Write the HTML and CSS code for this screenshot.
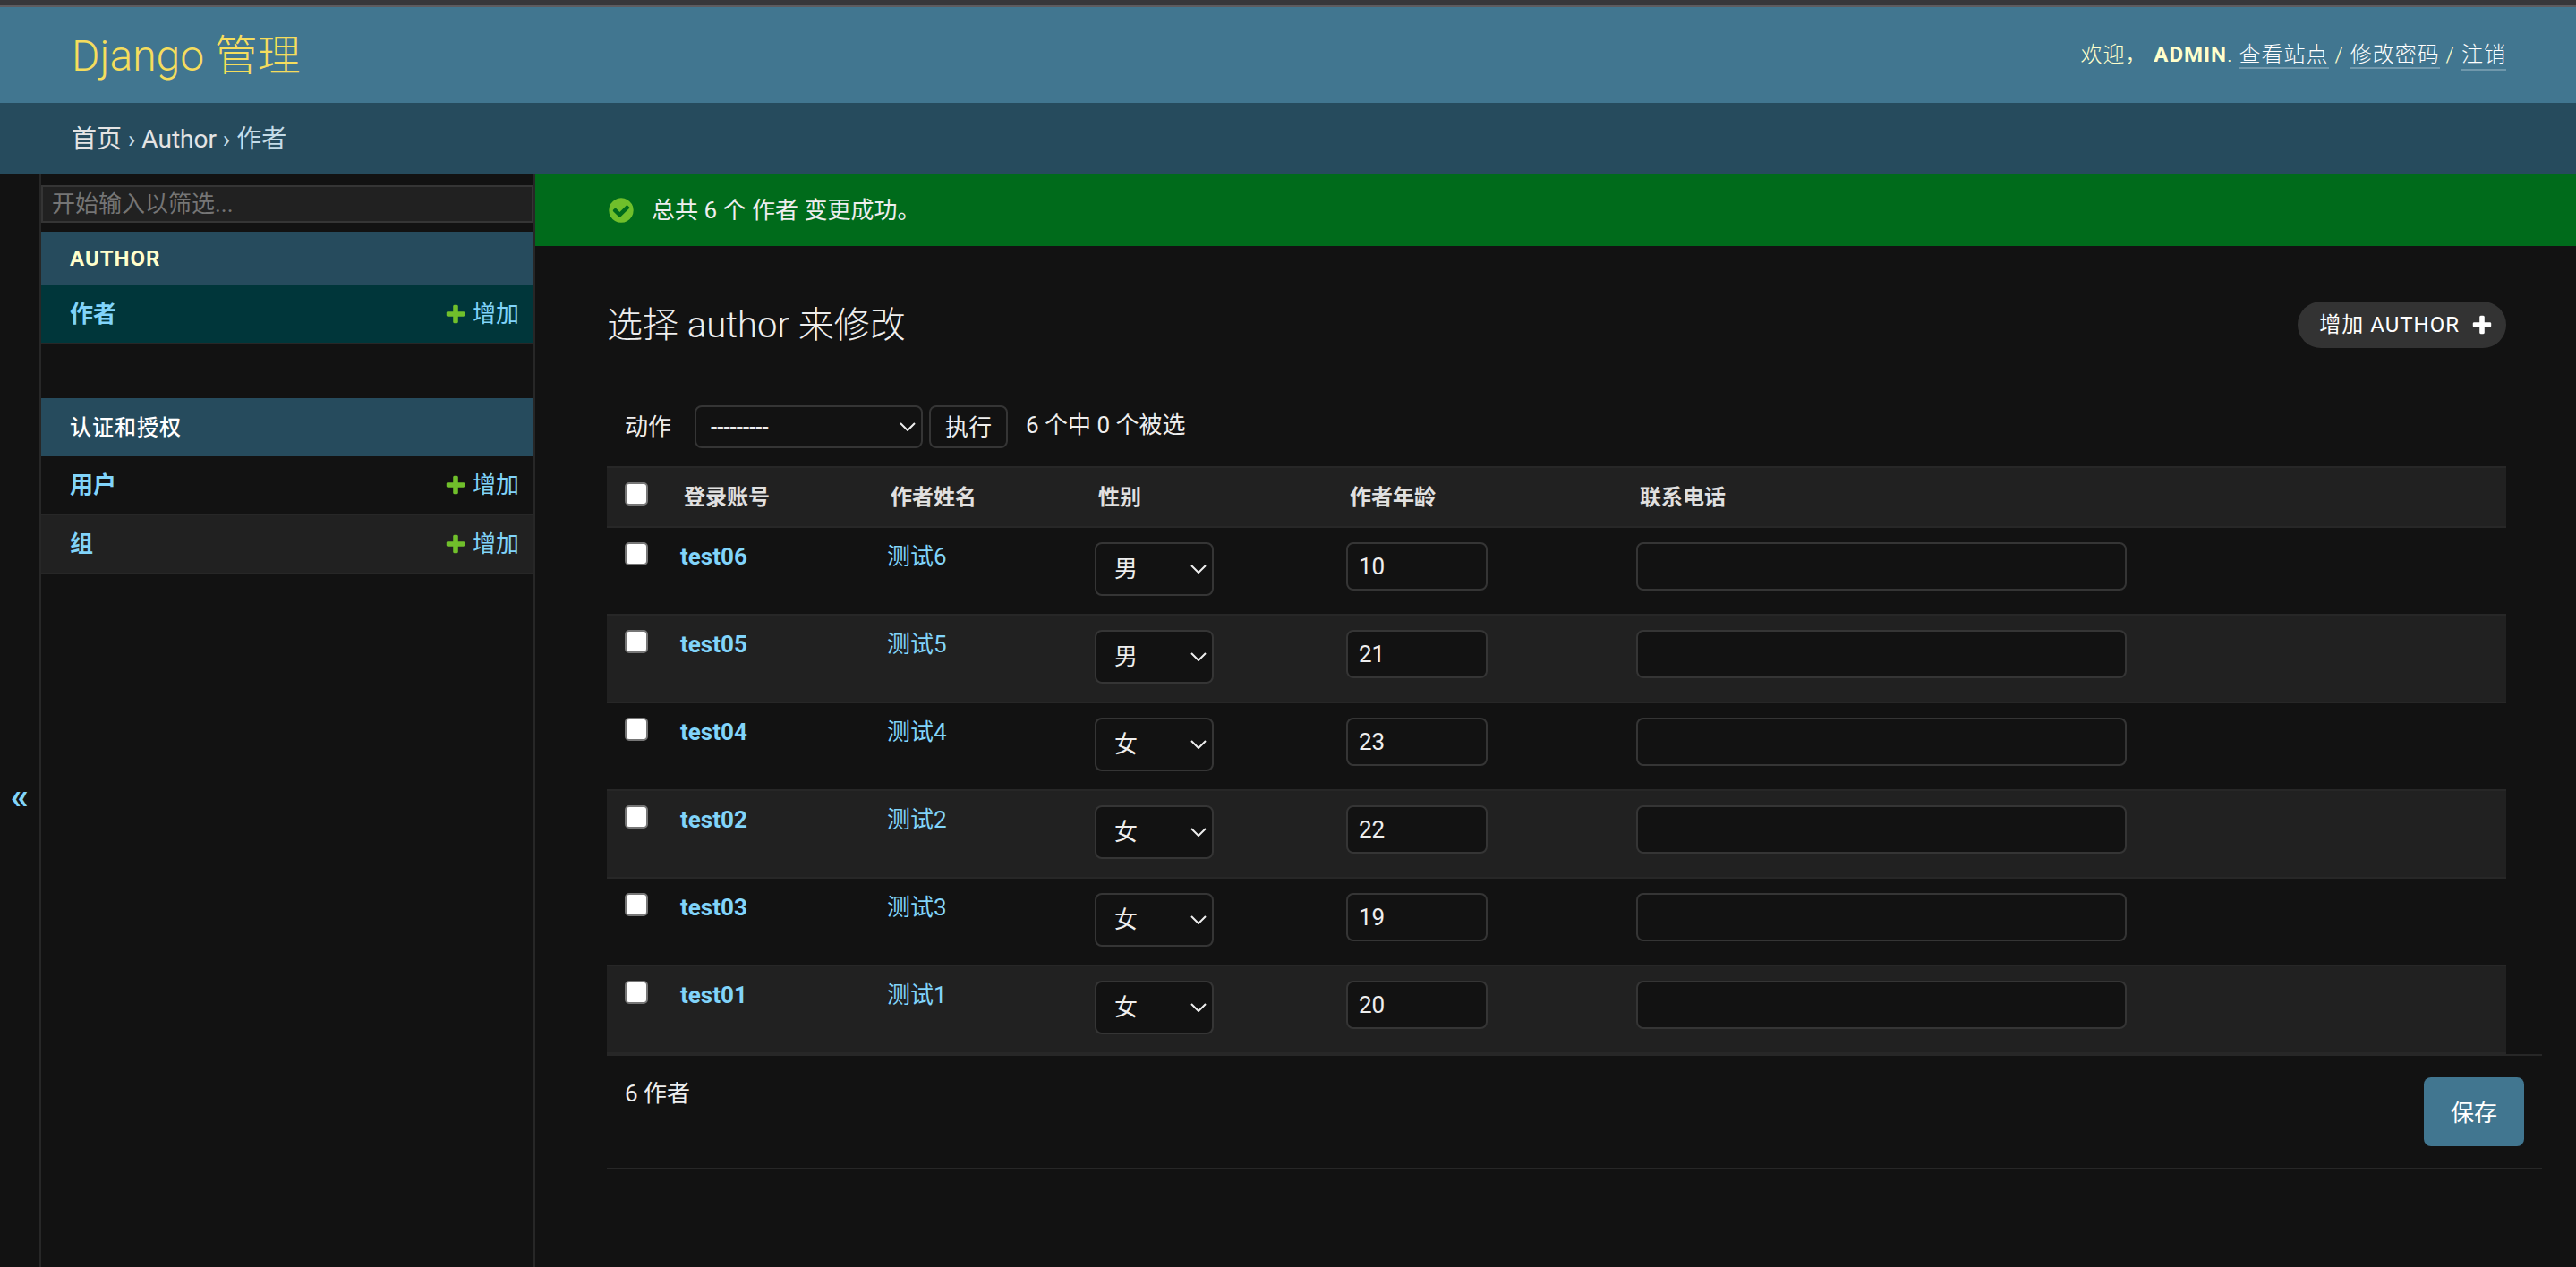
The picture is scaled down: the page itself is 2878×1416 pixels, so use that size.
FILE: index.html
```html
<!DOCTYPE html>
<html lang="zh-hans">
<head>
    <meta charset="UTF-8">
    <meta name="viewport" content="width=device-width, initial-scale=1.0">
    <title>选择 author 来修改 | Django 站点管理员</title>
    <link rel="stylesheet" href="styles.css">
</head>
<body>
    <!-- Icons -->
    <svg class="icon-defs" width="0" height="0">
        <symbol id="icon-add" viewBox="0 0 1792 1792">
            <path d="M1600 796v192q0 40-28 68t-68 28h-416v416q0 40-28 68t-68 28h-192q-40 0-68-28t-28-68v-416h-416q-40 0-68-28t-28-68v-192q0-40 28-68t68-28h416v-416q0-40 28-68t68-28h192q40 0 68 28t28 68v416h416q40 0 68 28t28 68z"/>
        </symbol>
        <symbol id="icon-yes" viewBox="0 0 1792 1792">
            <path d="M1412 734q0-28-18-46l-91-90q-19-19-45-19t-45 19l-408 407-226-226q-19-19-45-19t-45 19l-91 90q-18 18-18 46 0 27 18 45l362 362q19 19 45 19 27 0 46-19l543-543q18-18 18-45zm252 162q0 209-103 385.5t-279.5 279.5-385.5 103-385.5-103-279.5-279.5-103-385.5 103-385.5 279.5-279.5 385.5-103 385.5 103 279.5 279.5 103 385.5z"/>
        </symbol>
        <symbol id="icon-down" viewBox="0 0 18 10">
            <path d="M1 1l8 8 8-8" fill="none" stroke="#eee" stroke-width="2"/>
        </symbol>
    </svg>

    <div class="window-edge"></div>

    <!-- Header -->
    <header id="header">
        <h1 id="site-name"><a href="#">Django 管理</a></h1>
        <div id="user-tools">
            <span class="welcome">欢迎，</span>
            <strong>ADMIN</strong>.
            <a href="#">查看站点</a> /
            <a href="#">修改密码</a> /
            <a href="#" class="logout">注销</a>
        </div>
    </header>

    <nav class="breadcrumbs">
        <a href="#">首页</a> › <a href="#">Author</a> › 作者
    </nav>

    <div class="main">
        <button class="toggle-nav-sidebar" type="button">«</button>

        <!-- Sidebar -->
        <nav id="nav-sidebar">
            <input type="text" id="nav-filter" placeholder="开始输入以筛选...">
            <div class="module">
                <h2 class="latin">AUTHOR</h2>
                <div class="model current">
                    <a href="#" class="name">作者</a>
                    <a href="#" class="addlink"><svg><use href="#icon-add"/></svg>增加</a>
                </div>
            </div>
            <div class="module auth">
                <h2>认证和授权</h2>
                <div class="model">
                    <a href="#" class="name">用户</a>
                    <a href="#" class="addlink"><svg><use href="#icon-add"/></svg>增加</a>
                </div>
                <div class="model even">
                    <a href="#" class="name">组</a>
                    <a href="#" class="addlink"><svg><use href="#icon-add"/></svg>增加</a>
                </div>
            </div>
        </nav>

        <div class="content-wrap">
            <div class="success">
                <svg><use href="#icon-yes"/></svg>
                <span>总共 6 个 作者 变更成功。</span>
            </div>

            <main id="content">
                <div class="title-bar">
                    <h1>选择 author 来修改</h1>
                    <a href="#" class="object-tool">增加 AUTHOR<svg><use href="#icon-add"/></svg></a>
                </div>

                <form id="changelist-form">
                    <div class="actions">
                        <label for="action">动作</label>
                        <div class="select action-select">
                            <select id="action"><option>---------</option></select>
                            <svg><use href="#icon-down"/></svg>
                        </div>
                        <button type="button">执行</button>
                        <span class="action-counter">6 个中 0 个被选</span>
                    </div>

                    <table id="result_list">
                        <colgroup>
                            <col class="col-check">
                            <col class="col-account">
                            <col class="col-name">
                            <col class="col-sex">
                            <col class="col-age">
                            <col>
                        </colgroup>
                        <thead>
                            <tr>
                                <th class="check"><input type="checkbox"></th>
                                <th>登录账号</th>
                                <th>作者姓名</th>
                                <th>性别</th>
                                <th>作者年龄</th>
                                <th>联系电话</th>
                            </tr>
                        </thead>
                        <tbody>
                            <tr>
                                <td><input type="checkbox"></td>
                                <td><a href="#" class="account">test06</a></td>
                                <td><a href="#">测试6</a></td>
                                <td><div class="select"><select><option>男</option></select><svg><use href="#icon-down"/></svg></div></td>
                                <td><input type="text" class="age" value="10"></td>
                                <td><input type="text" class="phone"></td>
                            </tr>
                            <tr>
                                <td><input type="checkbox"></td>
                                <td><a href="#" class="account">test05</a></td>
                                <td><a href="#">测试5</a></td>
                                <td><div class="select"><select><option>男</option></select><svg><use href="#icon-down"/></svg></div></td>
                                <td><input type="text" class="age" value="21"></td>
                                <td><input type="text" class="phone"></td>
                            </tr>
                            <tr>
                                <td><input type="checkbox"></td>
                                <td><a href="#" class="account">test04</a></td>
                                <td><a href="#">测试4</a></td>
                                <td><div class="select"><select><option>女</option></select><svg><use href="#icon-down"/></svg></div></td>
                                <td><input type="text" class="age" value="23"></td>
                                <td><input type="text" class="phone"></td>
                            </tr>
                            <tr>
                                <td><input type="checkbox"></td>
                                <td><a href="#" class="account">test02</a></td>
                                <td><a href="#">测试2</a></td>
                                <td><div class="select"><select><option>女</option></select><svg><use href="#icon-down"/></svg></div></td>
                                <td><input type="text" class="age" value="22"></td>
                                <td><input type="text" class="phone"></td>
                            </tr>
                            <tr>
                                <td><input type="checkbox"></td>
                                <td><a href="#" class="account">test03</a></td>
                                <td><a href="#">测试3</a></td>
                                <td><div class="select"><select><option>女</option></select><svg><use href="#icon-down"/></svg></div></td>
                                <td><input type="text" class="age" value="19"></td>
                                <td><input type="text" class="phone"></td>
                            </tr>
                            <tr>
                                <td><input type="checkbox"></td>
                                <td><a href="#" class="account">test01</a></td>
                                <td><a href="#">测试1</a></td>
                                <td><div class="select"><select><option>女</option></select><svg><use href="#icon-down"/></svg></div></td>
                                <td><input type="text" class="age" value="20"></td>
                                <td><input type="text" class="phone"></td>
                            </tr>
                        </tbody>
                    </table>

                    <div class="paginator">
                        <span>6 作者</span>
                        <button type="button" class="save">保存</button>
                    </div>
                </form>
            </main>
        </div>
    </div>
</body>
</html>
```

FILE: styles.css
```css
* {
    box-sizing: border-box;
}
body {
    margin: 0;
    height: 1416px;
    overflow: hidden;
    display: flex;
    flex-direction: column;
    background: #121212;
    color: #eeeeee;
    font-family: Roboto, "Noto Sans CJK SC", sans-serif;
    font-size: 26px;
    line-height: 32px;
}
a {
    color: #81d4fa;
    text-decoration: none;
}
h1, h2 {
    margin: 0;
}
input, select, button {
    font-family: inherit;
    font-size: 26px;
    color: #eeeeee;
    background: #121212;
    border: 2px solid #353535;
    border-radius: 8px;
    margin: 0;
}
svg {
    display: block;
    flex: none;
}
.icon-defs {
    position: absolute;
}
.window-edge {
    height: 8px;
    flex: none;
    background: #37373b;
    border-bottom: 2px solid #5d5b5f;
}

/* Header */
#header {
    height: 107px;
    flex: none;
    padding: 2px 78px 0 80px;
    display: flex;
    justify-content: space-between;
    align-items: center;
    background: #417690;
    color: #ffffcc;
}
#site-name {
    font-size: 48px;
    font-weight: 300;
    line-height: 60px;
}
#site-name a {
    color: #f5dd5d;
}
#user-tools {
    font-size: 24px;
    font-weight: 300;
    letter-spacing: 1px;
    line-height: 30px;
}
#user-tools strong {
    font-weight: 700;
}
#user-tools a {
    display: inline-block;
    height: 31px;
    color: #ffffff;
    border-bottom: 2px solid rgba(255, 255, 255, 0.25);
}
#user-tools .logout {
    height: 33px;
    vertical-align: top;
}
.breadcrumbs {
    height: 80px;
    flex: none;
    padding: 0 80px;
    line-height: 82px;
    font-size: 28px;
    background: #264b5d;
    color: #c4dce8;
}
.breadcrumbs a {
    color: #e4e4e4;
}

/* Sidebar */
.main {
    flex: 1;
    display: flex;
    min-height: 0;
}
.toggle-nav-sidebar {
    width: 46px;
    padding: 170px 0 0;
    border: 0;
    border-right: 2px solid #272727;
    border-radius: 0;
    font-size: 40px;
    font-weight: 700;
    color: #81d4fa;
    line-height: 40px;
}
#nav-sidebar {
    width: 552px;
    flex: none;
    padding-top: 12px;
    border-right: 2px solid #272727;
}
#nav-filter {
    display: block;
    width: 550px;
    height: 42px;
    padding: 0 10px;
    background: #212121;
    border-radius: 0;
}
#nav-filter::placeholder {
    color: #757575;
}
.module {
    margin-top: 10px;
}
.module.auth {
    margin-top: 60px;
}
.module h2 {
    height: 65px;
    padding: 0 32px;
    font-size: 24px;
    font-weight: 500;
    line-height: 66px;
    letter-spacing: 1px;
    background: #264b5d;
    color: #ffffff;
}
.module h2.latin {
    height: 60px;
    line-height: 60px;
    font-weight: 700;
    color: #ffffcc;
}
.model {
    height: 66px;
    padding: 0 16px 0 32px;
    display: flex;
    justify-content: space-between;
    align-items: center;
    border-bottom: 2px solid #272727;
}
.model.current {
    background: #00363a;
}
.model.even {
    background: #212121;
}
.model .name {
    font-weight: 700;
}
.addlink {
    display: flex;
    align-items: center;
}
.addlink svg {
    width: 26px;
    height: 26px;
    margin-right: 6px;
    fill: #70bf2b;
}

/* Messages */
.content-wrap {
    flex: 1;
}
.success {
    height: 80px;
    padding-left: 80px;
    display: flex;
    align-items: center;
    background: #006b1b;
}
.success svg {
    width: 32px;
    height: 32px;
    margin-right: 18px;
    fill: #70bf2b;
}

/* Content */
#content {
    padding: 62px 38px 0 80px;
}
.title-bar {
    height: 52px;
    padding-right: 40px;
    display: flex;
    justify-content: space-between;
    align-items: center;
}
.title-bar h1 {
    padding-top: 2px;
    font-size: 40px;
    font-weight: 300;
    line-height: 50px;
    color: #eeeeee;
}
.object-tool {
    height: 52px;
    padding: 0 14px 0 24px;
    display: flex;
    align-items: center;
    border-radius: 30px;
    background: #333333;
    color: #ffffff;
    font-size: 24px;
    letter-spacing: 1px;
}
.object-tool svg {
    width: 26px;
    height: 26px;
    margin-left: 12px;
    fill: #ffffff;
}
.actions {
    height: 48px;
    margin: 64px 0 20px;
    padding-left: 20px;
    display: flex;
    align-items: center;
}
.select {
    position: relative;
    width: 133px;
    height: 60px;
}
.select select {
    display: block;
    appearance: none;
    width: 100%;
    height: 100%;
    padding: 0 20px;
}
.select svg {
    position: absolute;
    right: 8px;
    top: 25px;
    width: 18px;
    height: 10px;
}
.action-select {
    width: 255px;
    height: 48px;
    margin-left: 26px;
}
.action-select select {
    padding: 0 16px;
}
.action-select svg {
    top: 19px;
}
.actions button {
    width: 88px;
    height: 48px;
    margin-left: 7px;
    padding: 0 0 3px;
}
.action-counter {
    margin: -4px 0 0 20px;
}

/* Results */
#result_list {
    width: 2122px;
    table-layout: fixed;
    border-spacing: 0;
}
.col-check {
    width: 66px;
}
.col-account {
    width: 231px;
}
.col-name {
    width: 232px;
}
.col-sex {
    width: 281px;
}
.col-age {
    width: 324px;
}
th {
    height: 69px;
    padding: 0 20px;
    font-size: 24px;
    text-align: left;
    line-height: 24px;
    background: #212121;
    color: #e0e0e0;
    border-top: 2px solid #272727;
    border-bottom: 2px solid #272727;
}
th.check {
    vertical-align: top;
    padding-top: 16px;
}
td {
    height: 98px;
    padding: 16px 16px 0;
    vertical-align: top;
    border-bottom: 2px solid #272727;
}
tbody tr:nth-child(even) {
    background: #212121;
}
input[type="checkbox"] {
    appearance: none;
    display: block;
    width: 26px;
    height: 26px;
    margin-left: 4px;
    background: #ffffff;
    border: 2px solid #767676;
    border-radius: 5px;
}
th input[type="checkbox"] {
    margin-left: 0;
}
.account {
    font-weight: 700;
}
.age, .phone {
    display: block;
    height: 54px;
    padding: 0 12px;
}
.age {
    width: 158px;
}
.phone {
    width: 548px;
}
.paginator {
    height: 129px;
    padding: 24px 20px 0;
    display: flex;
    justify-content: space-between;
    align-items: flex-start;
    border-top: 2px solid #272727;
    border-bottom: 2px solid #272727;
}
.paginator span {
    padding-top: 2px;
}
.paginator .save {
    width: 112px;
    height: 77px;
    padding: 0 0 3px;
    border: 0;
    background: #417690;
    color: #ffffff;
}
```
